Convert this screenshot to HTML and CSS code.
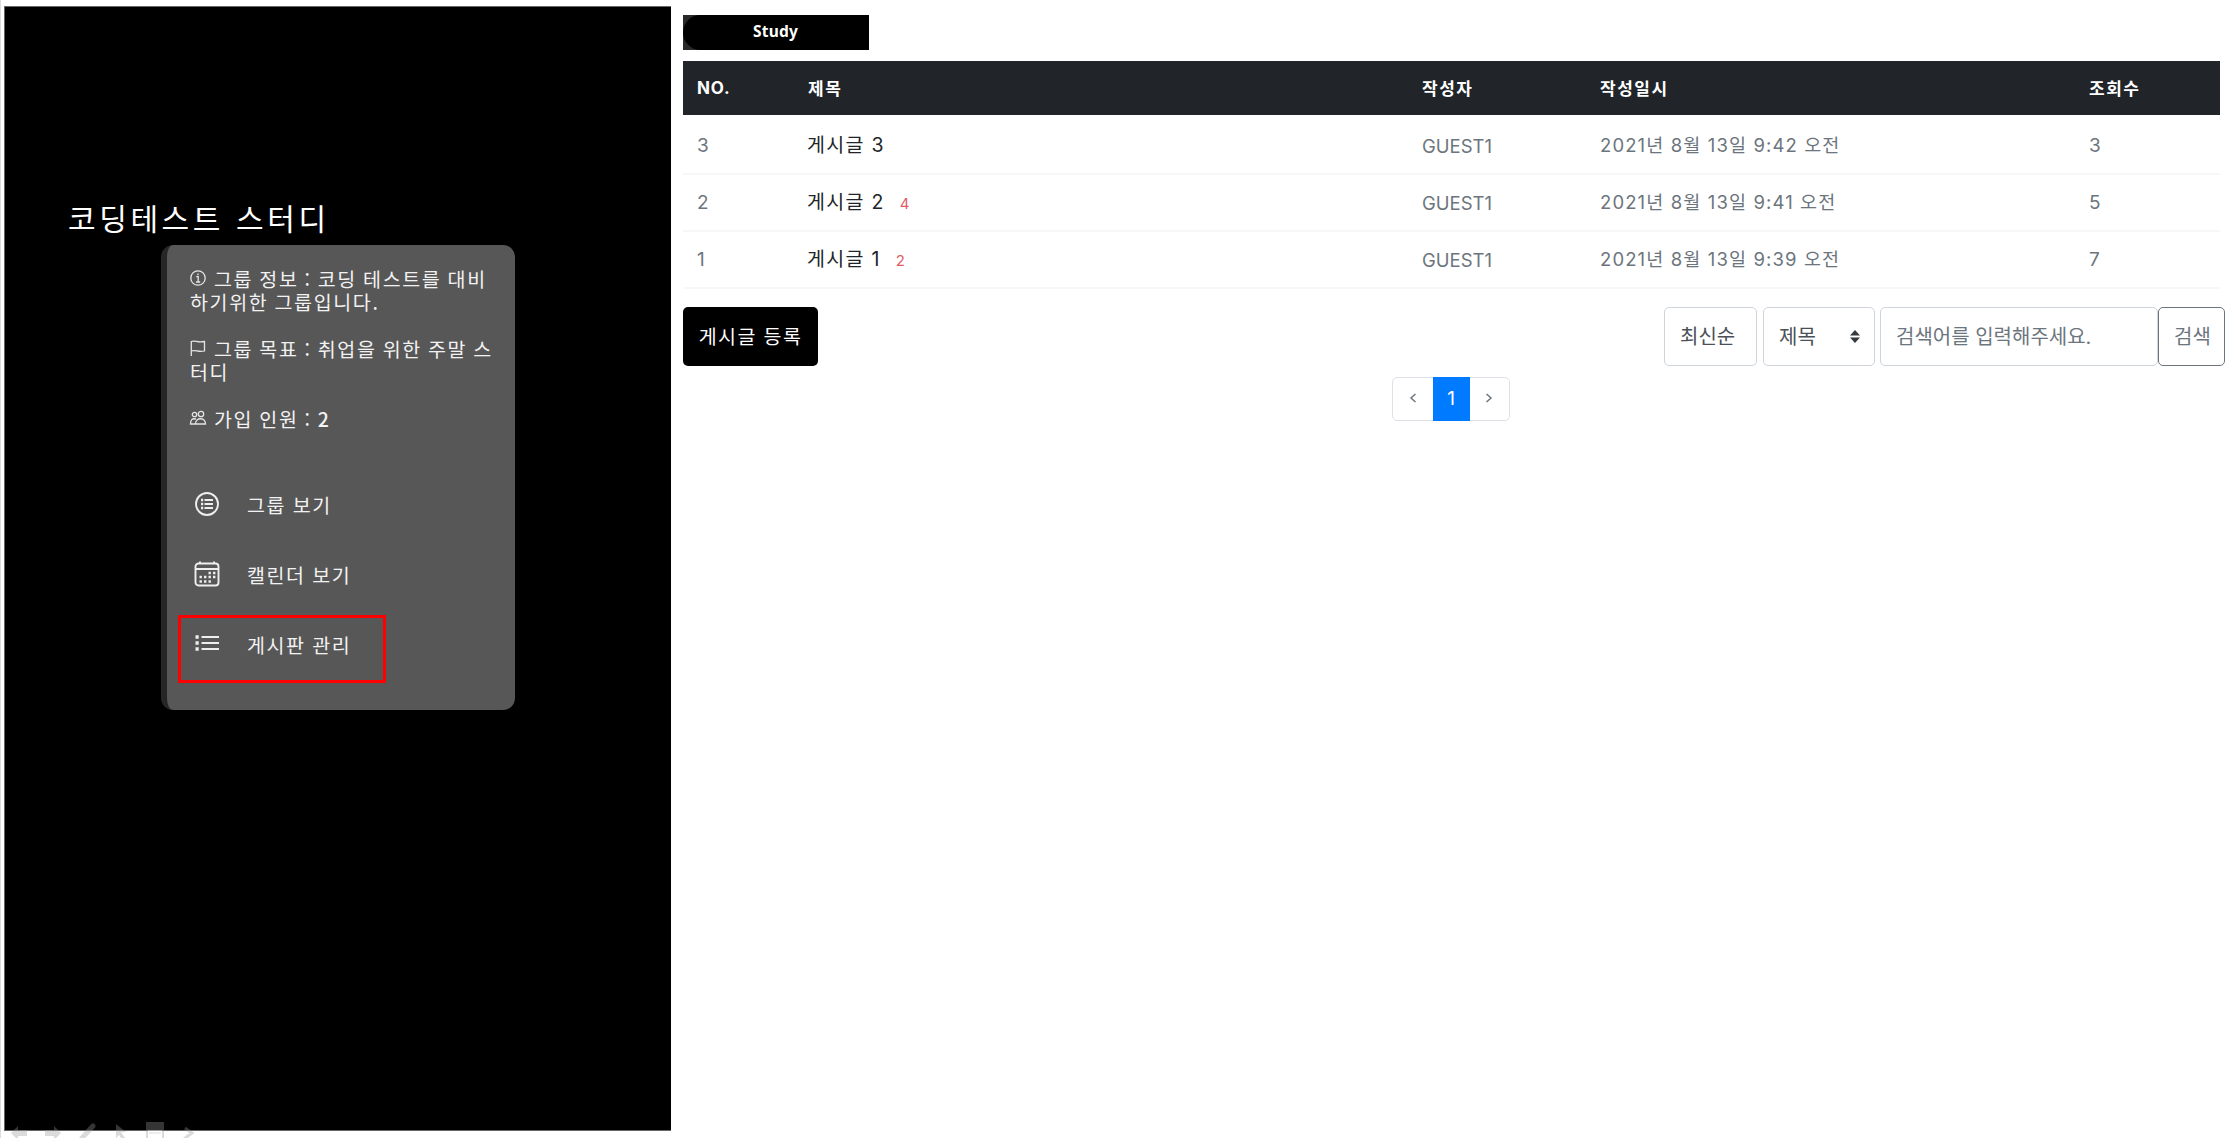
FILE: index.html
```html
<!DOCTYPE html>
<html lang="ko">
<head>
<meta charset="utf-8">
<title>코딩테스트 스터디</title>
<link rel="stylesheet" href="styles.css">
</head>
<body>
<div class="page">
  <aside class="sidebar">
    <h1 class="title">코딩테스트 스터디</h1>
    <section class="card">
      <p class="info"><svg class="mini" viewBox="0 0 16 16"><circle cx="8" cy="8" r="7.2"/><path d="M6.2 6.7h2v5M6 12h4.2M8 3.6v1.6"/></svg>그룹 정보 : 코딩 테스트를 대비<br>하기위한 그룹입니다.</p>
      <p class="info"><svg class="mini" viewBox="0 0 16 16"><path d="M1.3 16V1.5c4-1.600 6 1.700 13.200 0v9.500c-6 1.800-9-1.700-13.200 0"/></svg>그룹 목표 : 취업을 위한 주말 스<br>터디</p>
      <p class="info"><svg class="mini" viewBox="0 0 16 16"><circle cx="4.500" cy="4.500" r="2.200"/><circle cx="11" cy="4" r="2.700"/><path d="M5.500 14c0-7 10-7 10 0zM5 14H.5c0-4 1.500-6 5.500-5"/></svg>가입 인원 : <b>2</b></p>
      <nav class="menu">
        <a class="item"><svg viewBox="0 0 26 26"><circle cx="13" cy="13" r="11"/><path d="M10.500 9H19M10.500 13H19M10.500 17H19"/><path class="dots" d="M7 9h2.200M7 13h2.200M7 17h2.200"/></svg>그룹 보기</a>
        <a class="item"><svg viewBox="0 0 26 26"><rect x="1.500" y="2.500" width="23" height="22" rx="3"/><path d="M1.500 8h23M6 .5v2M20 .5v2"/><path class="dots" d="M14.500 12h2.400M19 12h2.400M5.500 16h2.400M10 16h2.400M14.500 16h2.400M19 16h2.400M5.500 20.500h2.400M10 20.500h2.400M14.500 20.500h2.400"/></svg>캘린더 보기</a>
        <a class="item active"><svg viewBox="0 0 26 26"><path d="M7.500 6H25M7.500 12H25M7.500 18H25"/><path class="dots big" d="M1.500 6h3.200M1.500 12h3.200M1.500 18h3.200"/></svg>게시판 관리</a>
      </nav>
    </section>
  </aside>
  <main class="board">
    <div class="tag"><span>Study</span></div>
    <table class="posts">
      <colgroup><col class="c-no"><col class="c-title"><col class="c-user"><col class="c-date"><col class="c-hit"></colgroup>
      <thead><tr><th>NO.</th><th>제목</th><th>작성자</th><th>작성일시</th><th>조회수</th></tr></thead>
      <tbody>
        <tr><td>3</td><td class="subject">게시글 3</td><td class="user">GUEST1</td><td class="date">2021년 8월 13일 9:42 오전</td><td>3</td></tr>
        <tr><td>2</td><td class="subject">게시글 2<small>4</small></td><td class="user">GUEST1</td><td class="date">2021년 8월 13일 9:41 오전</td><td>5</td></tr>
        <tr><td>1</td><td class="subject">게시글 1<small>2</small></td><td class="user">GUEST1</td><td class="date">2021년 8월 13일 9:39 오전</td><td>7</td></tr>
      </tbody>
    </table>
    <div class="tools">
      <button class="write">게시글 등록</button>
      <div class="box sort">최신순</div>
      <div class="box field">제목<svg viewBox="0 0 10 13"><path d="M0 5.500 5 0l5 5.500zM0 7.500 5 13l5-5.500z"/></svg></div>
      <div class="box query">검색어를 입력해주세요.</div>
      <button class="box search">검색</button>
    </div>
    <div class="pager">
      <a><svg viewBox="0 0 8 10"><path d="M6.500 1 2 5l4.500 4"/></svg></a>
      <a class="current">1</a>
      <a><svg viewBox="0 0 8 10"><path d="m1.500 1 4.500 4-4.500 4"/></svg></a>
    </div>
  </main>
</div>
<svg class="slidebar" viewBox="0 0 200 16">
  <path d="M11 11l7-7v4h9v6h-9v4zM61 11l-7-7v4h-9v6h9v4z"/>
  <path class="pen" d="M82 16 93 4"/>
  <path d="M116 2l10 8h-5l4 6h-4l-2-3-3 3z"/>
  <path d="M146 0h18v16h-18z"/><path class="sheet" d="M148 8h14v8h-14z"/><path class="rule" d="M149 11h12"/>
  <path class="chevron" d="M185 6l7 5-8 6"/>
</svg>
</body>
</html>
```
FILE: styles.css
```css
* { box-sizing: border-box; }
body {
  margin: 0;
  height: 1138px;
  overflow: hidden;
  background: #fff;
  border-left: 1px solid #dcdcdc;
  font-family: Inter, "Noto Sans CJK KR", sans-serif;
  color: #6c757d;
}
.page { display: flex; padding: 6px 0 0 3px; }
.sidebar {
  width: 667px;
  height: 1125px;
  padding: 190px 0 0 63px;
  background: #000;
  color: #fff;
  border: 1px solid #666;
  border-width: 1px 0 1px 1px;
  font-family: "Noto Sans CJK KR", sans-serif;
}
.title { margin: 0; font-size: 30px; font-weight: 400; line-height: 40px; height: 48px; letter-spacing: 3.6px; white-space: nowrap; }
.card {
  width: 354px;
  height: 465px;
  margin-left: 93px;
  padding: 22px 0 0 23px;
  background: #575757;
  border-left: 6px solid #262626;
  border-radius: 12px;
  color: #f2f2f2;
}
.info { margin: 0 0 23.400px; font-size: 19.500px; line-height: 23.300px; letter-spacing: 1.650px; word-spacing: -1px; white-space: nowrap; }
.mini { width: 16px; height: 16px; margin-right: 8px; vertical-align: 1px; fill: none; stroke: #e4e4e4; stroke-width: 1.300; overflow: visible; }
.info b { font-weight: 500; }
.menu { margin: 45px 0 0 -12px; display: flex; flex-direction: column; gap: 2px; }
.item {
  display: flex;
  align-items: center;
  gap: 27px;
  width: 208px;
  height: 68px;
  padding: 0 0 10px 16px;
  font-size: 19.500px;
  letter-spacing: 1.600px;
  word-spacing: -.5px;
  white-space: nowrap;
}
.item svg { width: 26px; height: 26px; flex: none; fill: none; stroke: #eee; stroke-width: 1.900; }
.item .dots { stroke-width: 2.400; }
.item .big { stroke-width: 3.400; }
.active { outline: 3px solid #f00; outline-offset: -3px; }
.board { flex: 1; padding: 9px 7px 0 12px; }
.tag { width: 186px; height: 35px; background: #292929; }
.tag span {
  display: block;
  height: 35px;
  border-radius: 18px 0 0 18px;
  padding-right: 1px;
  background: #000;
  color: #fff;
  font: 700 15.500px/33px "Noto Sans", sans-serif;
  letter-spacing: .2px;
  text-align: center;
}
.posts { width: 1537px; margin-top: 11px; border-collapse: separate; border-spacing: 0; table-layout: fixed; }
.c-no { width: 111px; }
.c-title { width: 614px; }
.c-user { width: 178px; }
.c-date { width: 489px; }
th { height: 54px; padding: 0 0 1px 14px; background: #212529; color: #fff; font-size: 17px; font-weight: 700; text-align: left; letter-spacing: 1.500px; }
th:first-child { letter-spacing: .8px; }
td { height: 57px; padding: 0 0 0 14px; border-bottom: 2px solid #f7f7f7; font-size: 19px; letter-spacing: 1px; white-space: nowrap; }
.user { font-size: 18.500px; letter-spacing: 0; }
.date { padding-bottom: 3px; font-size: 18.500px; letter-spacing: 1.120px; }
.subject { padding: 0 0 4px 13px; color: #212529; font-size: 19.500px; letter-spacing: 1.300px; }
tbody tr:first-child td { height: 60px; padding-top: 3px; }
.subject small { margin-left: 15px; color: #e05c66; font-size: 15px; }
.tools { display: flex; margin-top: 18px; height: 59px; }
.tools button { font-family: inherit; }
.write { width: 135px; margin-right: auto; padding: 0 0 3px; border: 0; border-radius: 5px; background: #000; color: #fff; font-size: 19.500px; letter-spacing: 1.400px; }
.box {
  display: flex;
  align-items: center;
  height: 59px;
  padding: 0 0 3px 15px;
  border: 1px solid #ced4da;
  border-radius: 5px;
  background: #fff;
  color: #495057;
  font-size: 20px;
  white-space: nowrap;
}
.sort { width: 93px; margin-right: 6px; }
.field { width: 112px; margin-right: 5px; justify-content: space-between; padding-right: 14px; }
.field svg { width: 10px; height: 13px; margin-top: 3px; fill: #343a40; }
.query { width: 278px; color: #6c757d; }
.search { width: 67px; border-color: #6c757d; color: #6c757d; }
.pager { display: flex; width: 118px; height: 44px; margin: 11px 0 0 709px; border: 1px solid #dee2e6; border-radius: 5px; }
.pager a { flex: 1; display: flex; align-items: center; justify-content: center; padding-bottom: 2px; }
.pager svg { width: 8px; height: 10px; fill: none; stroke: #6c757d; stroke-width: 1.500; }
.pager .current { flex: 0 0 37px; margin: -1px 0; background: #007bff; color: #fff; font-size: 19px; }
.slidebar { position: absolute; left: 0; top: 1122px; width: 200px; height: 16px; fill: #999; opacity: .35; }
.slidebar .pen { stroke: #999; stroke-width: 5; stroke-linecap: round; }
.slidebar .chevron { fill: none; stroke: #999; stroke-width: 3; }
.slidebar .sheet { fill: #fff; }
.slidebar .rule { stroke: #999; }
```
